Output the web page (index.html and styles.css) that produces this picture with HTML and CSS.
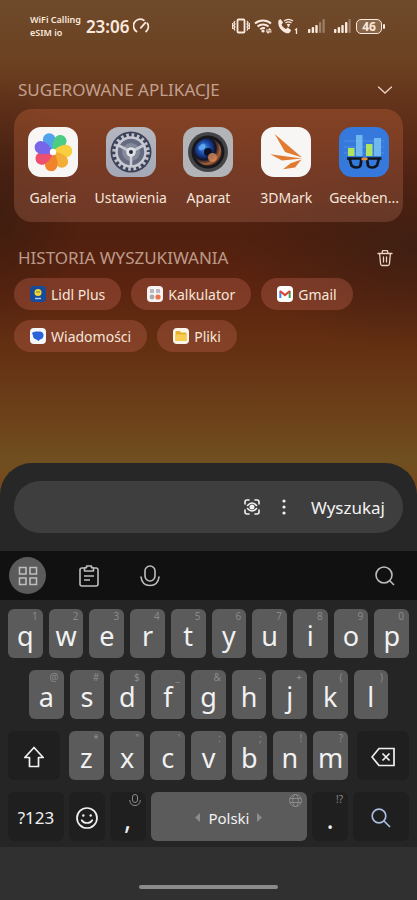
FILE: index.html
```html
<!DOCTYPE html>
<html lang="pl">
<head>
<meta charset="utf-8">
<meta name="viewport" content="width=device-width, initial-scale=1">
<title>Wyszukaj</title>
<link rel="stylesheet" href="styles.css">
</head>
<body>
<header class="status">
  <div class="carrier"><span>WiFi Calling</span><span>eSIM io</span></div>
  <time class="clock">23:06</time>
  <svg class="gauge" width="17" height="16" viewBox="0 0 17 16" fill="none" stroke="currentColor" stroke-width="1.8" stroke-linecap="round"><path d="M3.500 13.500A6.500 6.500 0 0 1 10.800 2.300M14.300 5.200a6.500 6.500 0 0 1-1.200 8.300M7.800 9.800l4.400-5"/></svg>
  <div class="indicators">
    <svg width="18" height="16" viewBox="0 0 18 16" fill="none" stroke="currentColor"><rect x="5.500" y="1.500" width="7" height="13" rx="1" stroke-width="1.800"/><path stroke-width="1.300" d="M3 3l-1 1.500L3 6 2 7.500 3 9l-1 1.500L3 12.500M.7 5v6M15 3l1 1.500L15 6l1 1.500L15 9l1 1.500-1 2M17.300 5v6"/></svg>
    <svg width="19" height="16" viewBox="0 0 19 16" fill="none" stroke="currentColor" stroke-width="2"><path d="M1 5.500a12 12 0 0 1 16 0M3.500 8.500a8.200 8.200 0 0 1 11 0M6.200 11.300a4.600 4.600 0 0 1 4.800-1"/><circle cx="9" cy="13" r="1.600" fill="currentColor" stroke="none"/><path stroke-width="1.200" d="M12 12h4.500l-1.500-1.500M17.500 13.800H13l1.500 1.500"/></svg>
    <svg width="22" height="17" viewBox="0 0 22 17" fill="none" stroke="currentColor"><path fill="currentColor" stroke="none" d="M1.500 2.500l2-1.500 2.600 3.600-1.600 2c.8 2 2.200 3.400 4.300 4.400l2-1.500 3.400 2.700-1.500 2.300c-1.500 1.500-4 .8-6.200-.7C3.200 11.500.5 7.500 1.500 2.500z"/><path stroke-width="1.300" d="M7 3a7.500 7.500 0 0 1 9 0M8.500 5a5 5 0 0 1 6 0M10 7a2.500 2.500 0 0 1 3 0"/><circle cx="11.500" cy="8" r="1" fill="currentColor" stroke="none"/><path stroke-width="1.300" d="M18 12l1.500-1v5"/></svg>
    <svg class="signal" width="17" height="16" viewBox="0 0 17 16" fill="currentColor"><rect y="11" width="2.400" height="4" rx=".8"/><rect x="3.700" y="9" width="2.400" height="6" rx=".8"/><rect x="7.300" y="7" width="2.400" height="8" rx=".8"/><g opacity=".35"><rect x="11" y="4" width="2.200" height="11" rx=".8"/><rect x="14.500" y="1" width="2.200" height="14" rx=".8"/></g></svg>
    <svg class="signal" width="17" height="16" viewBox="0 0 17 16" fill="currentColor"><rect y="11" width="2.400" height="4" rx=".8"/><rect x="3.700" y="9" width="2.400" height="6" rx=".8"/><rect x="7.300" y="7" width="2.400" height="8" rx=".8"/><rect x="11" y="4" width="2.400" height="11" rx=".8"/><rect opacity=".35" x="14.500" y="1" width="2.200" height="14" rx=".8"/></svg>
    <span class="battery">46</span>
  </div>
</header>

<main class="results">
  <section>
    <div class="heading">
      <h2>SUGEROWANE APLIKACJE</h2>
      <button class="plain" aria-label="Zwiń"><svg width="16" height="16" viewBox="0 0 16 16" fill="none" stroke="currentColor" stroke-width="1.300" stroke-linecap="round"><path d="M1.500 5L8 11l6.500-6"/></svg></button>
    </div>
    <div class="apps">
      <a class="app" href="#">
        <svg width="50" height="50" viewBox="0 0 50 50"><rect width="50" height="50" rx="13" fill="#f8f6f5"/><g transform="translate(25 25)"><path d="M0 0C-4-3-6.500-9-6.300-13a6.300 6.300 0 0 1 12.600 0C6.500-9 4-3 0 0z" fill="#51a2ed" transform="rotate(-17)"/><path d="M0 0C-4-3-6.500-9-6.300-13a6.300 6.300 0 0 1 12.600 0C6.500-9 4-3 0 0z" fill="#4ccb83" transform="rotate(34)"/><path d="M0 0C-4-3-6.500-9-6.300-13a6.300 6.300 0 0 1 12.600 0C6.500-9 4-3 0 0z" fill="#f7cf3e" transform="rotate(86)"/><path d="M0 0C-4-3-6.500-9-6.300-13a6.300 6.300 0 0 1 12.600 0C6.500-9 4-3 0 0z" fill="#f3ad36" transform="rotate(137)"/><path d="M0 0C-4-3-6.500-9-6.300-13a6.300 6.300 0 0 1 12.600 0C6.500-9 4-3 0 0z" fill="#ef842c" transform="rotate(188)"/><path d="M0 0C-4-3-6.500-9-6.300-13a6.300 6.300 0 0 1 12.600 0C6.500-9 4-3 0 0z" fill="#ed506e" transform="rotate(240)"/><path d="M0 0C-4-3-6.500-9-6.300-13a6.300 6.300 0 0 1 12.600 0C6.500-9 4-3 0 0z" fill="#7965e8" transform="rotate(291)"/><circle r="3.200" fill="#fff"/></g></svg>
        <span>Galeria</span>
      </a>
      <a class="app" href="#">
        <svg width="50" height="50" viewBox="0 0 50 50"><defs><linearGradient id="silver" x2="0" y2="1"><stop stop-color="#b5b7c0"/><stop offset="1" stop-color="#a4a8b7"/></linearGradient></defs><rect width="50" height="50" rx="13" fill="url(#silver)"/><circle cx="25" cy="25" r="20.500" fill="#3c4258"/><circle cx="25" cy="25" r="16.700" fill="none" stroke="#bec1cc" stroke-width="4" stroke-dasharray="2.600 2.650"/><circle cx="25" cy="25" r="14.500" fill="#656b80" stroke="#c7cad3" stroke-width="2.500"/><circle cx="25" cy="25" r="9" fill="#858a9b"/><path d="M25 25L12 18M25 25l13-7M25 25v15" stroke="#c7cad3" stroke-width="2.600"/><circle cx="25" cy="25" r="4.800" fill="#e0e1e6"/><circle cx="25" cy="25" r="2" fill="#25293a"/></svg>
        <span>Ustawienia</span>
      </a>
      <a class="app" href="#">
        <svg width="50" height="50" viewBox="0 0 50 50"><defs><radialGradient id="lens" cx=".35" cy=".35" r=".75"><stop stop-color="#3c91ef"/><stop offset=".38" stop-color="#173b91"/><stop offset=".58" stop-color="#101223"/><stop offset=".8" stop-color="#a6613c"/><stop offset="1" stop-color="#33190f"/></radialGradient></defs><rect width="50" height="50" rx="13" fill="#b2b4b8"/><circle cx="25" cy="25" r="20" fill="#444447"/><circle cx="25" cy="25" r="16.500" fill="#17181c"/><circle cx="25" cy="25" r="13.500" fill="url(#lens)"/><circle cx="25" cy="25" r="4" fill="#0b1021"/><ellipse cx="19" cy="20" rx="4" ry="2.500" fill="#7cc5ff" opacity=".6" transform="rotate(-40 19 20)"/><circle cx="29.500" cy="30.500" r="4.500" fill="#d98b58" opacity=".8"/></svg>
        <span>Aparat</span>
      </a>
      <a class="app" href="#">
        <svg width="50" height="50" viewBox="0 0 50 50"><rect width="50" height="50" rx="13" fill="#f8f6f5"/><g fill="#e07b31"><path d="M13.700 7L41 30.500 24 25z"/><path d="M9.300 27.300L41 31.500l-20 2z"/><path d="M40.500 32.500L34 40.500l-12 1.700 7.500-6z"/></g></svg>
        <span>3DMark</span>
      </a>
      <a class="app" href="#">
        <svg width="50" height="50" viewBox="0 0 50 50"><rect width="50" height="50" rx="13" fill="#3679dc"/><path d="M5 14h40M5 20h40M5 26h40" stroke="#5992e6" stroke-width=".8"/><path fill="#aee45f" d="M9 21h6.500v8H9zM27 17h6.500v12H27z"/><path fill="#70b7f0" d="M17 8h6.500v21H17zM35 11h7v18h-7z"/><path d="M8 31.500h14.500l-1 7q-1 2-4 2t-5-2l-2-7M28 31.500h14.500M28 31.500l1 7q1 2 4 2t5-2l2-7" fill="none" stroke="#10151e" stroke-width="2.700"/><path d="M22.500 32h6" stroke="#e7903a" stroke-width="2.500"/></svg>
        <span>Geekben...</span>
      </a>
    </div>
  </section>

  <section>
    <div class="heading heading-history">
      <h2>HISTORIA WYSZUKIWANIA</h2>
      <button class="plain" aria-label="Wyczyść historię"><svg width="16" height="18" viewBox="0 0 16 18" fill="none" stroke="currentColor" stroke-width="1.300" stroke-linecap="round" stroke-linejoin="round"><path d="M1 4.500h14M5 4.300l.6-2.600h4.800l.6 2.600M2.600 4.500l1 10.500q.2 1.500 1.600 1.500h5.600q1.400 0 1.600-1.500l1-10.500M6.500 8v5M9.500 8v5"/></svg></button>
    </div>
    <div class="chips">
      <button class="chip"><svg width="16" height="16" viewBox="0 0 16 16"><rect width="16" height="16" rx="4" fill="#164b9c"/><circle cx="8" cy="6.500" r="3.500" fill="#f4d832"/><path d="M6 6h4" stroke="#8c8a3f" stroke-width="1.200"/><path d="M5 12.500h6" stroke="#b9cbe4" stroke-width="1.400"/></svg>Lidl Plus</button>
      <button class="chip"><svg width="16" height="16" viewBox="0 0 16 16"><rect width="16" height="16" rx="4" fill="#f5f3f4"/><path d="M3 3h4v4H3zM9 3h4v4H9z" fill="#bbb8be"/><circle cx="5" cy="11" r="2.400" fill="#aaa7ad"/><circle cx="11" cy="11" r="2.600" fill="#ef7147"/></svg>Kalkulator</button>
      <button class="chip"><svg width="16" height="16" viewBox="0 0 16 16"><rect width="16" height="16" rx="4" fill="#fff"/><path d="M3.300 12V5" stroke="#4486e8" stroke-width="2"/><path d="M12.700 12V5" stroke="#36a35a" stroke-width="2"/><path d="M3 5l5 4 5-4" fill="none" stroke="#df4438" stroke-width="2.200"/></svg>Gmail</button>
      <button class="chip"><svg width="16" height="16" viewBox="0 0 16 16"><rect width="16" height="16" rx="4" fill="#f6f7fb"/><path d="M6 3.500h4q4 .5 3.500 4.500-.5 3-3.500 3.500l-1.500 1.500-2-1.500Q3 11 2.800 7L2 5q1-1.500 4-1.500z" fill="#2b64da"/></svg>Wiadomości</button>
      <button class="chip"><svg width="16" height="16" viewBox="0 0 16 16"><rect width="16" height="16" rx="4" fill="#faf6e9"/><path d="M2.500 4q0-1 1-1H7l1 1.500h4.500q1 0 1 1V12q0 1-1 1h-9q-1 0-1-1z" fill="#e9af2f"/><path d="M2.500 6.500h11V12q0 1-1 1h-9q-1 0-1-1z" fill="#f6cd51"/></svg>Pliki</button>
    </div>
  </section>
</main>

<form class="sheet">
  <div class="search">
    <input type="search" aria-label="Szukaj">
    <button type="button" class="plain" aria-label="Skanuj"><svg width="16" height="16" viewBox="0 0 16 16" fill="none" stroke="currentColor" stroke-width="1.600" stroke-linecap="round"><path d="M1 5V3q0-2 2-2h2M11 1h2q2 0 2 2v2M15 11v2q0 2-2 2h-2M5 15H3q-2 0-2-2v-2M3.500 6.500q4.500-5 9 0M3.500 9.500q4.500 5 9 0"/><circle cx="8" cy="8" r="1.700" fill="currentColor"/></svg></button>
    <button type="button" class="plain" aria-label="Więcej"><svg width="16" height="16" viewBox="0 0 16 16" fill="currentColor"><circle cx="8" cy="2" r="1.600"/><circle cx="8" cy="8" r="1.600"/><circle cx="8" cy="14" r="1.600"/></svg></button>
    <button type="button" class="submit">Wyszukaj</button>
  </div>
</form>

<section class="toolbar" aria-label="Narzędzia klawiatury">
  <button class="tool tool-active" aria-label="Menu"><svg width="20" height="20" viewBox="0 0 20 20" fill="none" stroke="currentColor" stroke-width="1.600"><path d="M1.500 1.500h6.500v6.500H1.500zM12 1.500h6.500v6.500H12zM1.500 12h6.500v6.500H1.500zM12 12h6.500v6.500H12z"/></svg></button>
  <button class="tool" aria-label="Schowek"><svg width="20" height="22" viewBox="0 0 20 22" fill="none" stroke="currentColor" stroke-width="1.600" stroke-linejoin="round"><path d="M5.500 3H3Q1 3 1 5v14q0 2 2 2h14q2 0 2-2V5q0-2-2-2h-2.500M5.500 2.800h2V1h5v1.800h2V6h-9zM5 11h10M5 15h6"/></svg></button>
  <button class="tool" aria-label="Dyktowanie"><svg width="20" height="22" viewBox="0 0 20 22" fill="none" stroke="currentColor" stroke-width="1.600" stroke-linecap="round"><rect x="5" y="1" width="10" height="15" rx="5"/><path d="M1 12q1 8.500 9 8.500t9-8.500"/></svg></button>
  <button class="tool tool-end" aria-label="Szukaj"><svg width="20" height="20" viewBox="0 0 20 20" fill="none" stroke="currentColor" stroke-width="1.600"><circle cx="9" cy="9" r="8"/><path d="M14.800 14.800L19 19"/></svg></button>
</section>

<section class="keyboard" aria-label="Klawiatura">
  <div class="row">
    <button class="key">q<small>1</small></button><button class="key">w<small>2</small></button><button class="key">e<small>3</small></button><button class="key">r<small>4</small></button><button class="key">t<small>5</small></button><button class="key">y<small>6</small></button><button class="key">u<small>7</small></button><button class="key">i<small>8</small></button><button class="key">o<small>9</small></button><button class="key">p<small>0</small></button>
  </div>
  <div class="row row-inset">
    <button class="key">a<small>@</small></button><button class="key">s<small>#</small></button><button class="key">d<small>$</small></button><button class="key">f<small>_</small></button><button class="key">g<small>&amp;</small></button><button class="key">h<small>-</small></button><button class="key">j<small>+</small></button><button class="key">k<small>(</small></button><button class="key">l<small>)</small></button>
  </div>
  <div class="row row-shift">
    <button class="key key-dark key-icon" aria-label="Shift"><svg width="22" height="22" viewBox="0 0 22 22" fill="none" stroke="currentColor" stroke-width="1.700" stroke-linejoin="round"><path d="M11 1.500L1.800 11.500H6.500v9h9v-9h4.700z"/></svg></button>
    <div class="row letters">
      <button class="key">z<small>*</small></button><button class="key">x<small>"</small></button><button class="key">c<small>'</small></button><button class="key">v<small>:</small></button><button class="key">b<small>;</small></button><button class="key">n<small>!</small></button><button class="key">m<small>?</small></button>
    </div>
    <button class="key key-dark key-icon" aria-label="Usuń"><svg width="24" height="20" viewBox="0 0 24 20" fill="none" stroke="currentColor" stroke-width="1.700"><path d="M8 1.500h15v17H8L1 10zM11.500 6.500l7 7M18.500 6.500l-7 7"/></svg></button>
  </div>
  <div class="row row-bottom">
    <button class="key key-dark key-symbols">?123</button>
    <button class="key key-dark key-icon" aria-label="Emoji"><svg width="22" height="22" viewBox="0 0 22 22" fill="none" stroke="currentColor" stroke-width="1.700"><circle cx="11" cy="11" r="10"/><path d="M5.800 13.200q1.700 2.800 5.200 2.800t5.200-2.800" stroke-linecap="round"/><circle cx="7.300" cy="8.500" r="1.200" fill="currentColor" stroke="none"/><circle cx="14.700" cy="8.500" r="1.200" fill="currentColor" stroke="none"/></svg></button>
    <button class="key key-dark">,<small><svg width="12" height="12" viewBox="0 0 12 12" fill="none" stroke="currentColor"><rect x="3.500" y=".5" width="5" height="8" rx="2.500"/><path d="M.7 6q.5 5.500 5.300 5.500T11.300 6"/></svg></small></button>
    <button class="key key-space"><svg width="5" height="9" viewBox="0 0 5 9" fill="#8c8c8c"><path d="M5 0v9L0 4.500z"/></svg>Polski<svg width="5" height="9" viewBox="0 0 5 9" fill="#8c8c8c"><path d="M0 0v9l5-4.500z"/></svg><small><svg width="13" height="13" viewBox="0 0 13 13" fill="none" stroke="currentColor"><circle cx="6.500" cy="6.500" r="6"/><ellipse cx="6.500" cy="6.500" rx="2.800" ry="6"/><path d="M1 4.500h11M1 8.500h11"/></svg></small></button>
    <button class="key key-dark">.<small>!?</small></button>
    <button class="key key-dark key-icon key-search" aria-label="Szukaj"><svg width="20" height="20" viewBox="0 0 20 20" fill="none" stroke="currentColor" stroke-width="1.700"><circle cx="8" cy="8" r="6.800"/><path d="M13 13l6 6"/></svg></button>
  </div>
</section>
<footer class="gesture"><div class="gesture-bar"></div></footer>
</body>
</html>
```
FILE: styles.css
```css
* { box-sizing: border-box; }

body {
  margin: 0;
  min-height: 100vh;
  display: flex;
  flex-direction: column;
  font-family: "Noto Sans", sans-serif;
  font-size: 14px;
  color: #f6e6dc;
  background:
    radial-gradient(ellipse 180px 100px at 100% 250px, rgba(50, 30, 20, .6), transparent),
    radial-gradient(ellipse 80px 130px at 0 210px, rgba(45, 26, 14, .5), transparent),
    linear-gradient(#6e4a2b 0, #6b4222 60px, #64331a 100px, #552414 170px, #51200f 235px, #5c240f 290px, #643012 350px, #6c4019 410px, #704f20 460px, #784618 500px);
}

button, input {
  font: inherit;
  color: inherit;
  border: 0;
  padding: 0;
  background: none;
}

svg { display: block; flex: none; }

.status {
  display: flex;
  align-items: center;
  height: 52px;
  padding: 0 35px 0 30px;
  color: #fbe9de;
}

.carrier {
  display: flex;
  flex-direction: column;
  font-size: 9px;
  line-height: 13px;
  font-weight: 600;
}

.clock {
  margin-left: 5px;
  font-size: 17px;
  font-weight: 600;
}

.gauge { margin-left: 4px; }

.indicators {
  display: flex;
  align-items: center;
  gap: 4px;
  margin-left: auto;
}

.signal { margin-left: 5px; }

.battery {
  position: relative;
  width: 26px;
  height: 15px;
  margin-left: 1px;
  border: 1px solid currentColor;
  border-radius: 5px;
  background: rgba(255, 230, 210, .2);
  font-size: 12px;
  font-weight: 700;
  line-height: 13px;
  text-align: center;
}

.battery::after {
  content: "";
  position: absolute;
  top: 4px;
  right: -4px;
  width: 2px;
  height: 5px;
  border-radius: 1px;
  background: currentColor;
}

.results {
  padding: 19px 14px;
}

.heading {
  display: flex;
  align-items: center;
  justify-content: space-between;
  height: 38px;
  padding: 0 10px 0 4px;
  color: #ecd3c4;
}

.heading h2 {
  margin: 0;
  font-size: 17px;
  font-weight: 400;
  line-height: 24px;
  opacity: .68;
}

.heading-history {
  height: 40px;
  margin-top: 16px;
}

.apps {
  display: grid;
  grid-template-columns: repeat(5, 1fr);
  padding: 18px 0 14px;
  border-radius: 18px;
  background: linear-gradient(rgba(180, 90, 50, .42), rgba(150, 90, 70, .42));
}

.app {
  display: flex;
  flex-direction: column;
  align-items: center;
  gap: 11px;
  color: inherit;
  text-decoration: none;
  line-height: 20px;
}

.chips {
  display: flex;
  flex-wrap: wrap;
  gap: 10px;
}

.chip {
  display: flex;
  align-items: center;
  gap: 5px;
  height: 32px;
  padding: 0 16px;
  border-radius: 16px;
  background: rgba(180, 92, 72, .4);
}

.sheet {
  margin-top: auto;
  padding: 18px 14px;
  border-radius: 32px 32px 0 0;
  background: #272727;
  color: #f2f2f2;
}

.search {
  display: flex;
  align-items: center;
  gap: 16px;
  height: 52px;
  padding: 0 18px 0 20px;
  border-radius: 26px;
  background: #3e3e3e;
}

.search input {
  flex: 1;
  min-width: 0;
  outline: 0;
}

.submit {
  margin-left: 3px;
  font-size: 17px;
}

.toolbar {
  display: flex;
  align-items: center;
  gap: 24px;
  height: 49px;
  padding: 0 14px 0 9px;
  background: #111;
  color: #bdbdbd;
}

.tool {
  display: grid;
  place-items: center;
  width: 37px;
  height: 37px;
  border-radius: 50%;
}

.tool-active { background: #5b5b5b; }

.tool-end { margin-left: auto; }

.keyboard {
  display: grid;
  gap: 12px;
  padding: 9px 8px 6px;
  background: #252525;
  color: #f1f1f1;
}

.row {
  display: flex;
  gap: 6px;
}

.row-inset { padding: 0 21px; }

.row-shift {
  display: grid;
  grid-template-columns: 52fr 279fr 52fr;
  gap: 9px;
}

.row-bottom {
  display: grid;
  grid-template-columns: 56fr 36fr 36fr 157fr 36fr 56fr;
  gap: 5px;
}

.key {
  position: relative;
  flex: 1 1 0;
  min-width: 0;
  height: 49px;
  display: flex;
  align-items: center;
  justify-content: center;
  padding-top: 4px;
  border-radius: 6px;
  background: #5b5b5b;
  font-size: 27px;
  line-height: 28px;
}

.key small {
  position: absolute;
  top: 2px;
  right: 5px;
  font-size: 10px;
  line-height: 11px;
  color: #8a8a8a;
}

.key-dark { background: #1f1f1f; }

.key-icon { padding-top: 2px; }

.key-symbols {
  padding-top: 2px;
  font-size: 17px;
}

.key-space {
  gap: 8px;
  padding-top: 2px;
  font-size: 15px;
}

.key-search { color: #a9bce0; }

.gesture {
  display: flex;
  align-items: flex-end;
  justify-content: center;
  height: 53px;
  padding-bottom: 11px;
  background: #303030;
}

.gesture-bar {
  width: 33.3%;
  height: 4px;
  border-radius: 2px;
  background: #8b8b8b;
}
```
